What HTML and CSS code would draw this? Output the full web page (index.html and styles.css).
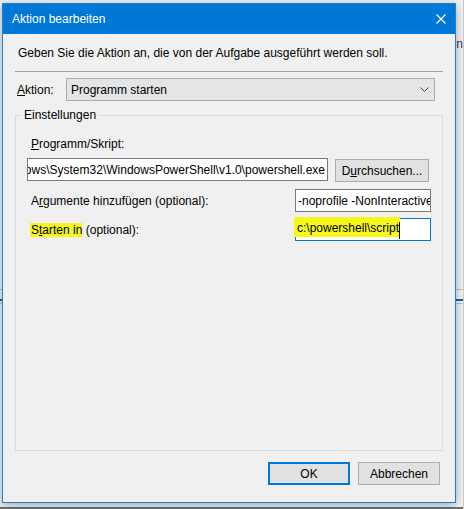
FILE: index.html
```html
<!DOCTYPE html>
<html lang="de">
<head>
<meta charset="utf-8">
<title>Aktion bearbeiten</title>
<link rel="stylesheet" href="styles.css">
</head>
<body>
<div class="desktop">
  <div class="bg-caption"><span>n</span></div>
  <div class="bg-rule rule-a"></div>
  <div class="bg-rule rule-b"></div>
  <div class="bg-rule rule-c"></div>
  <div class="bg-fill"></div>
  <div class="bg-bottom"></div>

  <div class="dialog">
    <div class="titlebar">
      <span class="title">Aktion bearbeiten</span>
      <svg class="close" width="10" height="10" viewBox="0 0 10 10"><path d="M0.5 0.5 L9.5 9.5 M9.5 0.5 L0.5 9.5" stroke="#fff" stroke-width="1.1" fill="none"/></svg>
    </div>
    <div class="content">
      <div class="intro">Geben Sie die Aktion an, die von der Aufgabe ausgeführt werden soll.</div>
      <div class="separator"></div>
      <div class="action-row">
        <span class="action-label"><u>A</u>ktion:</span>
        <div class="combo">
          <span>Programm starten</span>
          <svg class="chev" width="9" height="5" viewBox="0 0 9 5"><path d="M0.5 0.5 L4.5 4.5 L8.5 0.5" stroke="#444" stroke-width="1" fill="none"/></svg>
        </div>
      </div>
      <fieldset class="group">
        <legend>Einstellungen</legend>
        <div class="field-label"><u>P</u>rogramm/Skript:</div>
        <div class="prog-row">
          <div class="textbox prog"><span>C:\Windows\System32\WindowsPowerShell\v1.0\powershell.exe</span></div>
          <div class="btn browse">D<u>u</u>rchsuchen...</div>
        </div>
        <div class="opt-row">
          <span class="opt-label">A<u>r</u>gumente hinzufügen (optional):</span>
          <div class="textbox small"><span>-noprofile -NonInteractive -ExecutionPolicy Bypass</span></div>
        </div>
        <div class="opt-row start-row">
          <span class="opt-label"><span class="mark">S<u>t</u>arten in</span> (optional):</span>
          <div class="textbox small focused"><span class="mark-field">c:\powershell\script</span><span class="caret"></span></div>
        </div>
      </fieldset>
      <div class="buttons">
        <div class="btn ok">OK</div>
        <div class="btn cancel">Abbrechen</div>
      </div>
    </div>
  </div>
</div>
</body>
</html>
```

FILE: styles.css
```css
html, body {
  margin: 0;
  padding: 0;
}
body {
  background: #f2f2f2;
  font-family: "Liberation Sans", Arial, sans-serif;
  font-size: 12px;
  color: #000;
}
.desktop {
  position: relative;
  width: 464px;
  height: 509px;
  overflow: hidden;
  display: flex;
  flex-direction: column;
  background: #f2f2f2;
  box-sizing: border-box;
  border-right: 1px solid #c9c9c9;
}
.bg-caption {
  margin-top: 36px;
  height: 16px;
  line-height: 16px;
  text-align: right;
  padding-right: 0;
  color: #4b2c5e;
  font-size: 12px;
}
.bg-rule { height: 1px; }
.rule-a { margin-top: 237px; background: #bdbdbd; }
.rule-b { margin-top: 9px; height: 2px; background: #1f5ea6; }
.rule-c { margin-top: 2px; background: #c3c3c3; }
.bg-fill { flex: 1; }
.bg-bottom { height: 2px; background: #707070; }

/* dialog window */
.dialog {
  position: absolute;
  left: 2px;
  top: 3px;
  width: 454px;
  height: 500px;
  box-sizing: border-box;
  border: 1px solid #1883d7;
  background: #f0f0f0;
  box-shadow: 0 2px 9px rgba(0, 0, 0, 0.32);
  display: flex;
  flex-direction: column;
}
.titlebar {
  height: 30px;
  flex: none;
  background: #0078d7;
  color: #fff;
  display: flex;
  align-items: center;
  justify-content: space-between;
  padding: 0 9px 0 9px;
}
.title {
  font-size: 12px;
  line-height: 16px;
}
.close { display: block; margin-top: 0; }

.content {
  flex: 1;
  display: flex;
  flex-direction: column;
  padding: 0 12px 17px 12px;
  min-height: 0;
}
.intro {
  margin-top: 11px;
  padding-left: 3px;
  line-height: 16px;
  white-space: nowrap;
}
.separator {
  margin-top: 10px;
  border-top: 1px solid #a0a0a0;
}
.action-row {
  margin-top: 6px;
  display: flex;
  align-items: center;
  height: 23px;
}
.action-label {
  margin-left: 2px;
  width: 49px;
  line-height: 16px;
}
.combo {
  width: 369px;
  height: 23px;
  box-sizing: border-box;
  border: 1px solid #adadad;
  background: #e5e5e5;
  display: flex;
  align-items: center;
  justify-content: space-between;
  padding: 0 5px 0 4px;
  line-height: 16px;
}
.chev { display: block; }

.group {
  flex: 1;
  margin: 6px 0 0 0;
  padding: 13px 11px 0 6px;
  border: 1px solid #dcdcdc;
  min-width: 0;
  min-height: 0;
}
.group legend {
  padding: 0 2px;
  line-height: 16px;
}
.field-label {
  margin-left: 9px;
  line-height: 16px;
}
.prog-row {
  margin-top: 6px;
  display: flex;
  align-items: flex-start;
}
.textbox {
  height: 23px;
  box-sizing: border-box;
  border: 1px solid #7a7a7a;
  background: #fff;
  display: flex;
  align-items: center;
  overflow: hidden;
  white-space: nowrap;
  line-height: 16px;
}
.prog {
  margin-left: 5px;
  width: 301px;
  justify-content: flex-end;
  padding-right: 2px;
}
.prog span, .small span { flex: none; }
.btn {
  height: 23px;
  box-sizing: border-box;
  border: 1px solid #adadad;
  background: #e1e1e1;
  display: flex;
  align-items: center;
  justify-content: center;
  line-height: 16px;
  white-space: nowrap;
}
.browse {
  margin-left: 7px;
  margin-top: 1px;
  width: 94px;
}
.opt-row {
  margin-top: 7px;
  display: flex;
  align-items: center;
  justify-content: space-between;
}
.start-row { margin-top: 6px; }
.opt-label {
  margin-left: 9px;
  line-height: 16px;
}
.small {
  width: 136px;
  padding-left: 2px;
}
.focused {
  border-color: #0078d7;
  overflow: visible;
}
.mark {
  background: #f7f71c;
  padding: 0 0 0 1px;
  margin-left: -1px;
}
.mark-field {
  background: #f7f71c;
  margin-left: -4px;
  margin-top: -5px;
  padding: 3px 1px 1px 3px;
}
.caret {
  width: 0;
  height: 17px;
  border-left: 1px solid #000;
  margin-left: -1px;
  margin-top: 2px;
}

.buttons {
  margin-top: 11px;
  display: flex;
  justify-content: flex-end;
  gap: 8px;
  padding-right: 3px;
}
.ok {
  width: 82px;
  border: 2px solid #0078d7;
}
.cancel {
  width: 82px;
}
```
